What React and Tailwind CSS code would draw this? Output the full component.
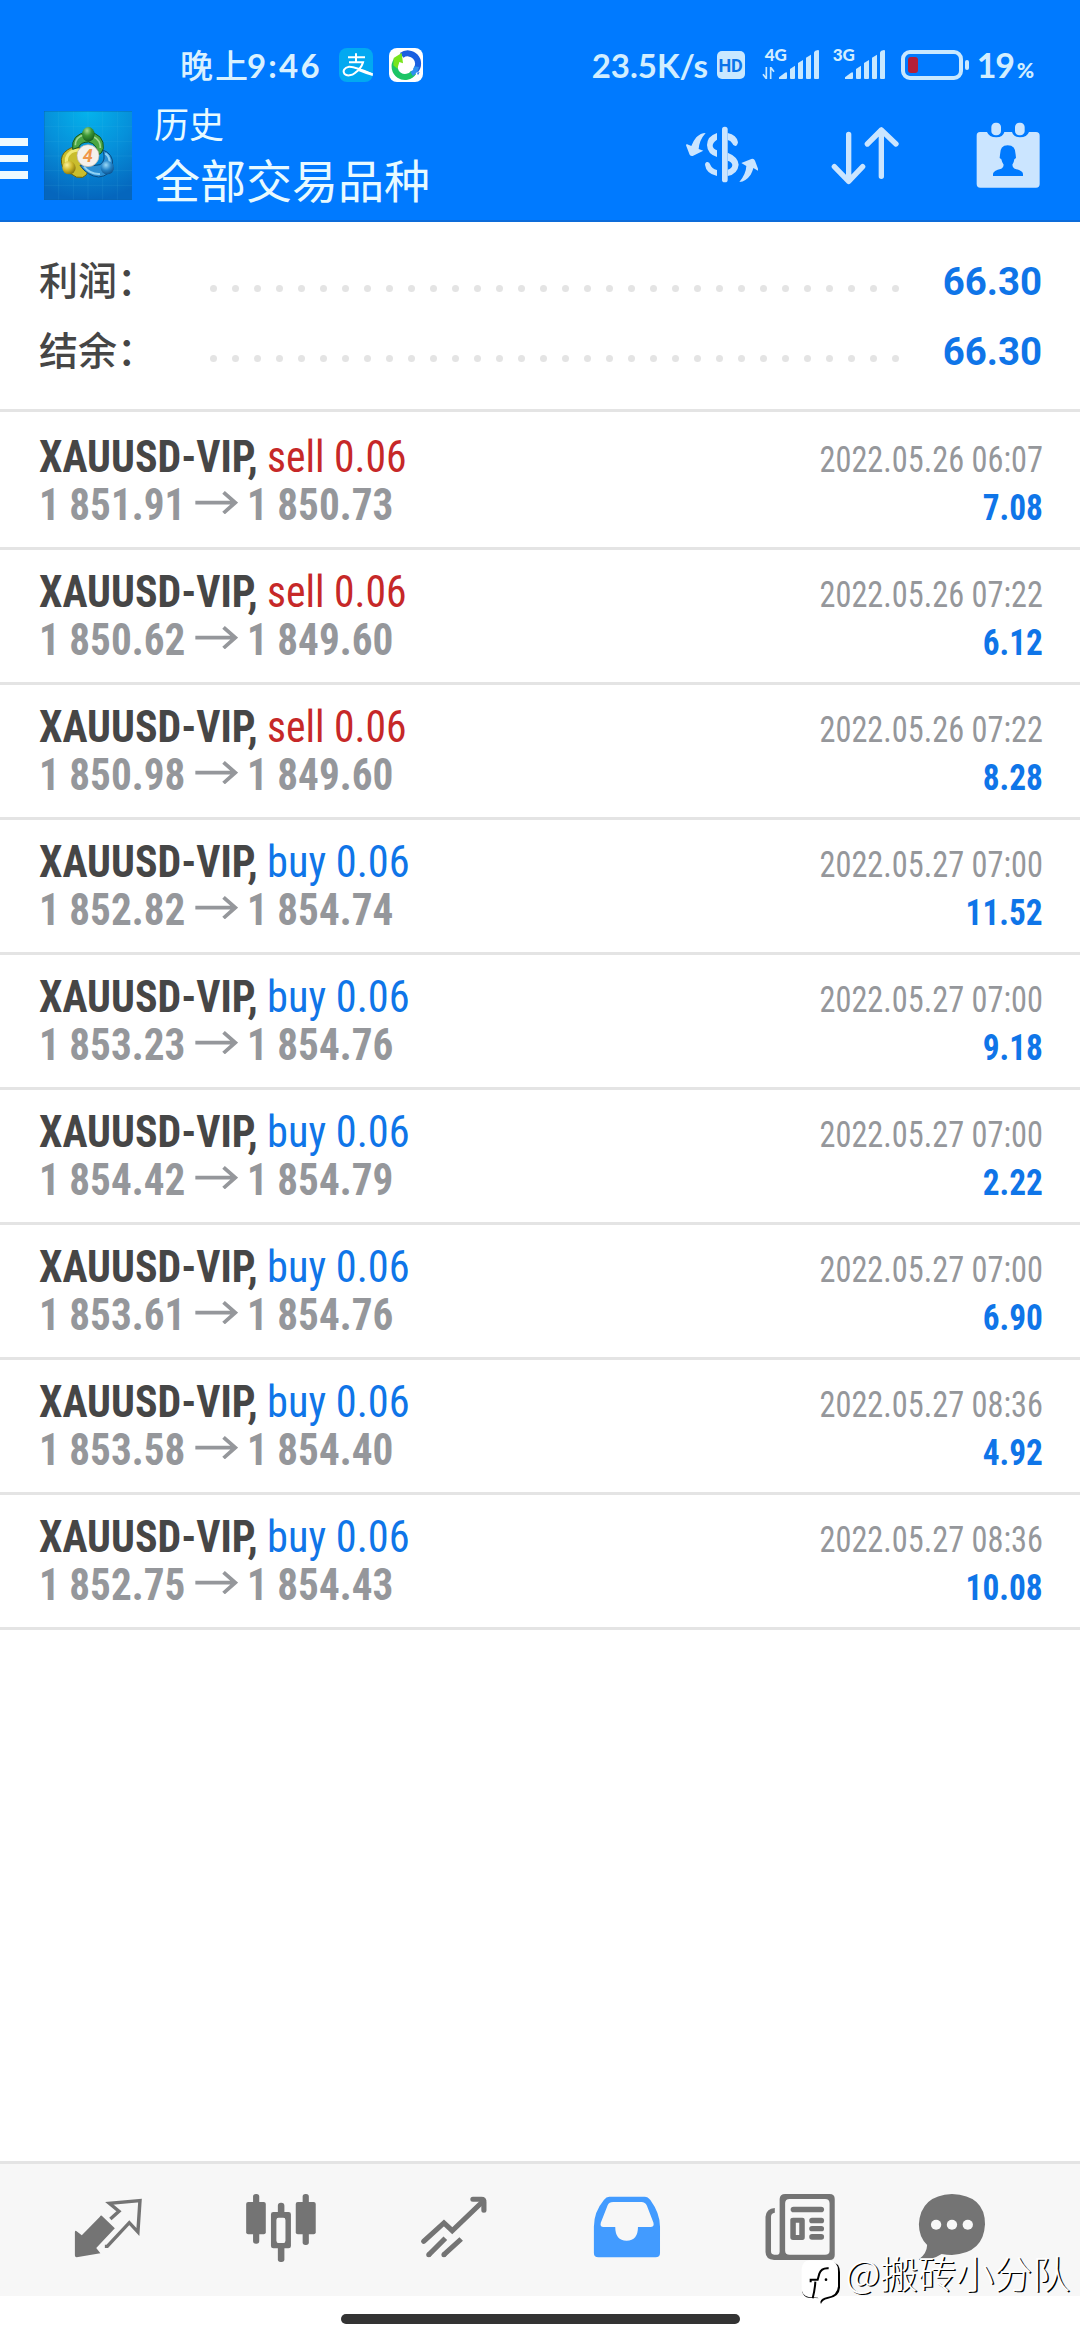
const trades = [
  ["sell", "1 851.91", "1 850.73", "2022.05.26 06:07", "7.08"],
  ["sell", "1 850.62", "1 849.60", "2022.05.26 07:22", "6.12"],
  ["sell", "1 850.98", "1 849.60", "2022.05.26 07:22", "8.28"],
  ["buy", "1 852.82", "1 854.74", "2022.05.27 07:00", "11.52"],
  ["buy", "1 853.23", "1 854.76", "2022.05.27 07:00", "9.18"],
  ["buy", "1 854.42", "1 854.79", "2022.05.27 07:00", "2.22"],
  ["buy", "1 853.61", "1 854.76", "2022.05.27 07:00", "6.90"],
  ["buy", "1 853.58", "1 854.40", "2022.05.27 08:36", "4.92"],
  ["buy", "1 852.75", "1 854.43", "2022.05.27 08:36", "10.08"],
];

function AlipayIcon() {
  return (
    <svg className="h-[34px] w-[34px]" viewBox="0 0 102 102">
      <rect width="102" height="102" rx="24" fill="#02a9f1" />
      <path d="M27 28H78M51 16V42M30 43H72C68 56 60 66 49 74C38 83 24 85 17 78C10 70 16 58 30 56C46 55 72 66 101 79" fill="none" stroke="#fff" strokeWidth="6" />
      <path d="M60 64Q82 69 101 76V84Q80 78 56 68Z" fill="#fff" />
    </svg>
  );
}

function SyncIcon() {
  return (
    <svg className="h-[34px] w-[34px]" viewBox="0 0 102 102">
      <rect width="102" height="102" rx="24" fill="#fff" />
      <path d="M38 22A31 31 0 0 1 80 67" fill="none" stroke="#1a5fe0" strokeWidth="18" />
      <path d="M22 38A31 31 0 0 0 74 73" fill="none" stroke="#1cc465" strokeWidth="18" />
      <path d="M68 78A32 32 0 0 0 83 56" fill="none" stroke="#2f8ff0" strokeWidth="14" />
      <path d="M14 30L38 15L42 46L31 42L25 62L13 52Z" fill="#77e41c" />
      <path d="M84 74L92 72L87 82Z" fill="#1a6fe8" />
    </svg>
  );
}

function Signal() {
  return (
    <svg className="h-[29px] w-10" viewBox="0 0 120 87" fill="#c8e8ff">
      <path d="M0 87V82L18 68Q24 64 24 70V84Q24 87 21 87Z" />
      <path d="M33 57L48 47V84Q48 87 45 87H36Q33 87 33 84Z" />
      <path d="M57 39L72 30V84Q72 87 69 87H60Q57 87 57 84Z" />
      <path d="M81 23L96 14V84Q96 87 93 87H84Q81 87 81 84Z" />
      <path d="M105 7Q107 1 117 0Q120 0 120 3V84Q120 87 117 87H108Q105 87 105 84Z" />
    </svg>
  );
}

function AppLogo() {
  return (
    <svg className="h-[89px] w-[88px]" viewBox="132 213 264 267" preserveAspectRatio="none">
      <defs>
        <radialGradient id="bg" cx="0.5" cy="0" r="1">
          <stop offset="0" stopColor="#04b3ec" />
          <stop offset="0.5" stopColor="#0690da" />
          <stop offset="1" stopColor="#0566bd" />
        </radialGradient>
        <radialGradient id="gr" cx="0.4" cy="0.25" r="0.8">
          <stop offset="0" stopColor="#a5dd93" />
          <stop offset="0.45" stopColor="#3c9635" />
          <stop offset="1" stopColor="#12561b" />
        </radialGradient>
        <radialGradient id="ye" cx="0.35" cy="0.3" r="0.8">
          <stop offset="0" stopColor="#fbf39a" />
          <stop offset="0.5" stopColor="#cdb527" />
          <stop offset="1" stopColor="#75680c" />
        </radialGradient>
        <radialGradient id="bl" cx="0.4" cy="0.3" r="0.8">
          <stop offset="0" stopColor="#9ad9f8" />
          <stop offset="0.5" stopColor="#2382c6" />
          <stop offset="1" stopColor="#084782" />
        </radialGradient>
      </defs>
      <rect x="132" y="213" width="264" height="267" fill="url(#bg)" />
      <path d="M176 213V480M220 213V480M264 213V480M308 213V480M352 213V480M132 260H396M132 304H396M132 348H396M132 392H396M132 436H396" stroke="#5cc4f0" strokeOpacity="0.22" strokeWidth="1.5" />
      <path d="M132 214.500H396M133 213V480M132 479H396" stroke="#0b5fa8" strokeOpacity="0.6" strokeWidth="2" />
      <path d="M214 402A40 40 0 0 1 202 330Q224 314 244 326L256 372Q274 400 248 412Q228 416 214 402Z" fill="#c9bd2d" stroke="#64600f" strokeWidth="3" />
      <path d="M202 376Q192 352 213 336Q226 328 238 332" fill="none" stroke="#f0e976" strokeWidth="9" />
      <path d="M262 372Q282 380 300 374Q320 362 308 330Q340 340 338 376Q330 408 296 411Q262 408 240 376Z" fill="#2c8fd3" stroke="#0b4b80" strokeWidth="3" />
      <path d="M252 380Q272 404 300 402M316 340Q332 352 328 372" fill="none" stroke="#8fd2f4" strokeWidth="6" />
      <path d="M218 328Q212 282 264 276Q314 282 310 326Q306 342 292 346Q294 312 266 306Q242 306 236 322Z" fill="#4ba643" stroke="#14561d" strokeWidth="3" />
      <path d="M226 316Q226 290 252 285M280 290Q302 300 301 324" fill="none" stroke="#9fd691" strokeWidth="5" />
      <ellipse cx="265" cy="283" rx="19" ry="22" fill="url(#gr)" />
      <circle cx="207" cy="383" r="20" fill="url(#ye)" />
      <circle cx="322" cy="383" r="20" fill="url(#bl)" />
      <circle cx="264" cy="347" r="33" fill="#f5f1ec" stroke="#b9b0a4" strokeWidth="2" />
      <text x="263" y="366" textAnchor="middle" fontFamily="Roboto" fontSize="54" fontWeight="700" fontStyle="italic" fill="#f0964a">4</text>
    </svg>
  );
}

function DollarIcon() {
  return (
    <svg className="h-20 w-20" viewBox="306 222 240 240" fill="#cbe5ff">
      <rect x="426" y="260" width="17" height="167" rx="8" />
      <path d="M411 279V299Q398 307 398 318Q399 326 411 331V351Q382 342 381 315Q382 288 411 279Z" />
      <path d="M380 366Q388 364 391 374Q395 386 411 390V408Q378 400 375 374Q375 368 380 366Z" />
      <path d="M443 279Q470 284 474 307Q472 318 466 318Q460 318 456 309Q452 301 443 300Z" />
      <path fillRule="evenodd" d="M443 338Q474 350 476 374Q473 402 443 408ZM443 362V389Q456 386 457 375Q456 366 443 362Z" />
      <path d="M377 279Q362 279 349 292Q339 304 334 318L320 312L318 316L329 344Q332 349 338 348L370 332L356 327Q358 300 377 279Z" />
      <path d="M478 426Q498 424 512 404Q518 394 520 384L534 392V386L525 362Q522 355 514 357L484 369L499 378Q498 402 478 426Z" />
    </svg>
  );
}

function SortIcon() {
  return (
    <svg className="h-20 w-20" viewBox="15 222 240 240" fill="none" stroke="#cbe5ff" strokeWidth="16" strokeLinecap="round" strokeLinejoin="round">
      <path d="M86 283V424M43 380L86 424L128 380" />
      <path d="M184 409V270M142 312L184 270L228 312" />
    </svg>
  );
}

function CalendarIcon() {
  return (
    <svg className="h-20 w-20" viewBox="444 222 240 240" fill="#cbe5ff">
      <path fillRule="evenodd" d="M480 276H501Q507 292 529 292Q549 292 553 276H576Q581 292 600 292Q621 292 627 276H648Q659 276 659 287V432Q659 443 648 443H481Q470 443 470 432V287Q470 276 480 276ZM563 316Q540 316 540 344L539 354L544 358Q546 368 551 374Q551 382 544 386Q519 392 519 402V408H609V402Q609 392 584 386Q577 382 577 374Q582 368 583 358L588 354L587 344Q587 316 563 316Z" />
      <rect x="514" y="248" width="29" height="38" rx="13" />
      <rect x="585" y="248" width="29" height="38" rx="13" />
    </svg>
  );
}

function TradeArrow() {
  return (
    <svg className="mt-[10px] mr-[9px] h-[23px] w-[43px] self-start" viewBox="567 784 125 69" preserveAspectRatio="none" fill="none" stroke="#95979b" strokeWidth="11">
      <path d="M568 819H684M650 788L684 819L650 850" />
    </svg>
  );
}

function NavIcon({ x, children }) {
  return (
    <svg className="h-[90px] w-20" viewBox={x + " 120 232.3 270"} preserveAspectRatio="none" fill="#747474">
      {children}
    </svg>
  );
}

export default function App() {
  return (
    <div className="flex h-[2340px] w-[1080px] flex-col overflow-hidden bg-white font-['Roboto','Noto_Sans_CJK_SC',sans-serif]">
      <header className="h-[222px] border-b-2 border-[#0d6cda] bg-[#007aff] text-[#e8faff]">
        <div className="flex h-[104px] items-end justify-between pr-[46px] pl-[180px] font-['Lato']">
          <div className="flex h-14 items-start">
            <span className="flex w-[159px] text-[33px] leading-[34px] whitespace-nowrap text-[#d9f1ff]">
              <span className="-mt-px w-[67px] font-['Noto_Sans_CJK_SC'] font-medium tracking-[2px]">晚上</span>
              <span className="font-bold tracking-[2.2px]">9:46</span>
            </span>
            <AlipayIcon />
            <span className="w-4" />
            <SyncIcon />
          </div>
          <div className="flex h-14 items-start text-[#d2eeff]">
            <span className="w-[125px] text-[33px] leading-[34px] font-bold whitespace-nowrap">23.5K/s</span>
            <span className="mt-[3px] flex h-7 w-7 items-center justify-center rounded-[5px] bg-[#c8e8ff] font-['Roboto'] text-[18px] font-bold text-[#0a74ea]">HD</span>
            <span className="ml-[17px] flex h-[31px] w-[17px] flex-col items-start justify-between">
              <span className="pl-[3px] text-[17px] leading-[13px] font-black">4G</span>
              <svg className="h-3 w-[13px]" viewBox="0 0 39 36" stroke="#c8e8ff" strokeWidth="5" fill="none">
                <path d="M13 0V36M3 22L12 34M26 36V0M27 2L36 14" />
              </svg>
            </span>
            <span className="mt-0.5 flex"><Signal /></span>
            <span className="ml-[14px] w-3 text-[17px] leading-[13px] font-black">3G</span>
            <span className="mt-0.5 flex"><Signal /></span>
            <span className="mt-0.5 ml-4 flex h-[30px] w-[62px] items-center rounded-[9px] border-4 border-[#c8e8ff] pl-[3px]">
              <span className="h-4 w-[10px] rounded-[3px] bg-[#b51f38]" />
            </span>
            <span className="mt-3 ml-0.5 h-[10px] w-1 rounded-sm bg-[#c8e8ff]" />
            <span className="ml-[8px] w-[40px] text-[34px] leading-[34px] font-bold tracking-[-1px]">19</span>
            <span className="mt-[10px] text-[21px] leading-[24px] font-black">%</span>
          </div>
        </div>
        <div className="flex">
          <div className="mt-[34px] flex w-[44px] flex-col gap-[9px]">
            <span className="h-[7.500px] w-7 bg-[#eefaff]" />
            <span className="h-[7.500px] w-7 bg-[#eefaff]" />
            <span className="h-[7.500px] w-7 bg-[#eefaff]" />
          </div>
          <div className="mt-[7px]"><AppLogo /></div>
          <div className="ml-[22px] flex flex-1 flex-col gap-[9px] font-['Noto_Sans_CJK_SC']">
            <span className="text-[35px] leading-[38px]">历史</span>
            <span className="text-[46px] leading-[54px]">全部交易品种</span>
          </div>
          <div className="mt-[10px] mr-8 flex gap-[63px]">
            <DollarIcon />
            <SortIcon />
            <CalendarIcon />
          </div>
        </div>
      </header>

      <section className="h-[190px] border-b-[3px] border-[#e4e4e4] pt-[25px]">
        {["利润：", "结余："].map((label) => (
          <div key={label} className="flex h-[70px] items-baseline pr-[38px] pl-[39px] leading-[70px]">
            <span className="w-[171px] font-['Noto_Sans_CJK_SC'] text-[39px] leading-[40px] font-medium text-[#464646]">{label}</span>
            <span className="mt-[38px] flex w-[689px] justify-between self-start">
              {Array.from({ length: 32 }, (_, i) => (
                <span key={i} className="h-[7px] w-[7px] rounded-full bg-[#e4e4e4]" />
              ))}
            </span>
            <span className="flex-1 origin-right scale-x-[0.985] text-right text-[39px] font-bold text-[#0f75e8]">66.30</span>
          </div>
        ))}
      </section>

      <main className="flex-1 pt-[3px] font-['Roboto_Condensed']">
        {trades.map(([side, open, close, date, profit], i) => (
          <div key={i} className="h-[135px] border-b-[3px] border-[#e4e4e4] pt-[18px] pr-[37.500px] pl-[39px] whitespace-nowrap">
            <div className="flex h-12 items-baseline text-[44px] leading-[48px]">
              <span className="w-[228px] origin-left scale-x-[0.952] font-bold text-[#464646]">XAUUSD-VIP,</span>
              <span className={side === "sell" ? "origin-left scale-x-[0.945] text-[#c62828]" : "origin-left scale-x-[0.963] text-[#0f75e8]"}>{side} 0.06</span>
              <span className="ml-auto origin-right scale-x-[0.873] text-[37px] leading-10 text-[#95979b]">{date}</span>
            </div>
            <div className="flex h-12 items-baseline text-[44px] leading-[48px] font-bold text-[#95979b]">
              <span className="w-[156px] origin-left scale-x-[0.936]">{open}</span>
              <TradeArrow />
              <span className="origin-left scale-x-[0.936]">{close}</span>
              <span className="ml-auto origin-right scale-x-[0.9] text-[37px] leading-10 text-[#0f75e8]">{profit}</span>
            </div>
          </div>
        ))}
      </main>

      <nav className="flex h-[135px] border-t-[3px] border-[#e4e4e4] bg-[#f7f7f7] pt-4 pl-[68px]">
        <div className="w-[173px]">
          <NavIcon x="199">
            <path d="M297 227L335 265L281 324L293 340L224 352Q219 352 219 346V276Q220 270 224 274L239 286L291 231Q294 226 297 227Z" />
            <path d="M322 237L347 214L319 190L408 182L402 276L377 248L313 319H306" fill="none" stroke="#747474" strokeWidth="10" />
          </NavIcon>
        </div>
        <div className="w-[173px]">
          <NavIcon x="700">
            <rect x="735" y="162" width="18" height="149" rx="8" />
            <rect x="715" y="186" width="57" height="97" rx="6" />
            <rect x="879" y="162" width="18" height="153" rx="8" />
            <rect x="859" y="186" width="58" height="97" rx="6" />
            <rect x="807" y="188" width="19" height="40" rx="9" />
            <rect x="807" y="316" width="19" height="50" rx="8" />
            <path fillRule="evenodd" d="M794 216H838Q845 216 845 223V318Q845 325 838 325H794Q787 325 787 318V223Q787 216 794 216ZM809 233Q803 233 803 240V302Q803 309 809 309H823Q829 309 829 302V240Q829 233 823 233Z" fill="#747474" />
            <rect x="804" y="234" width="24" height="74" rx="5" fill="#f7f7f7" />
          </NavIcon>
        </div>
        <div className="w-[173px]">
          <NavIcon x="1202">
            <g fill="none" stroke="#747474" strokeWidth="15" strokeLinejoin="miter">
              <path d="M1230 304L1289 249L1313 272L1404 182" strokeLinecap="round" />
              <path d="M1373 178H1398Q1405 178 1405 186V211" strokeLinecap="round" />
              <path d="M1293 295L1245 344M1339 297L1289 344" />
            </g>
            <circle cx="1245" cy="344" r="7.500" />
            <circle cx="1289" cy="344" r="7.500" />
          </NavIcon>
        </div>
        <div className="w-[173px]">
          <NavIcon x="138">
            <path fill="#429bff" fillRule="evenodd" d="M203 170H305Q315 170 322 180Q350 220 350 260V339Q350 352 337 352H171Q158 352 158 339V260Q158 216 187 180Q194 170 203 170ZM214 186Q202 186 198 196L178 248Q175 261 186 261H220Q220 302 253 302Q286 302 286 261H322Q334 261 331 248L312 197Q307 186 296 186Z" />
          </NavIcon>
        </div>
        <div className="w-[152px]">
          <NavIcon x="641">
            <path fillRule="evenodd" d="M714 162H843Q858 162 858 177V345Q858 360 843 360H682Q657 358 657 336V230Q659 206 684 204V218Q673 220 673 230V334Q673 344 682 344H692Q698 344 698 336V177Q699 162 714 162ZM727 177Q714 177 714 190V332Q714 344 727 344H830Q843 344 843 332V190Q843 177 830 177Z" />
            <rect x="730" y="200" width="97" height="17" rx="8.500" />
            <path fillRule="evenodd" d="M737 233H764Q771 233 771 240V292Q771 300 764 300H737Q729 300 729 292V240Q729 233 737 233ZM745 248V285H755V248Z" />
            <rect x="784" y="233" width="43" height="17" rx="8" />
            <rect x="784" y="258" width="43" height="16" rx="8" />
            <rect x="784" y="282" width="43" height="17" rx="8" />
          </NavIcon>
        </div>
        <div>
          <NavIcon x="1083">
            <path d="M1199 162Q1295 166 1295 253Q1291 340 1199 345Q1184 345 1169 342Q1142 360 1108 360Q1101 360 1105 356Q1126 340 1127 315Q1103 292 1103 253Q1108 166 1199 162Z" />
            <circle cx="1153" cy="254" r="15" fill="#f7f7f7" />
            <circle cx="1199" cy="254" r="15" fill="#f7f7f7" />
            <circle cx="1245" cy="254" r="15" fill="#f7f7f7" />
          </NavIcon>
        </div>
      </nav>

      <footer className="relative flex h-11 justify-center pt-[18px]">
        <div className="h-[10px] w-[399px] rounded-full bg-[#333]" />
        <div className="absolute -top-[46px] right-[10px] flex items-start">
          <svg className="mt-[9px] h-[46px] w-[41px]" viewBox="58 236 123 138">
            <path d="M90 244H150Q178 246 178 276V322Q176 350 142 355Q124 359 121 371Q116 360 122 354L84 352Q70 350 64 334V266Q68 246 90 244Z" fill="#000" />
            <path d="M86 240H146Q172 242 172 272V318Q170 346 140 350Q122 354 119 364L112 352L84 350Q64 346 63 326V264Q66 242 86 240Z" fill="#fff" />
            <path d="M144 264Q122 262 116 280L111 298H90V306M104 304Q103 326 96 354" fill="none" stroke="#000" strokeWidth="6" />
            <circle cx="136" cy="298" r="4" fill="#000" />
          </svg>
          <span className="ml-1 font-['Noto_Sans_CJK_SC'] text-[38px] leading-[44px] font-light whitespace-nowrap text-white [text-shadow:1.5px_1px_0_#000]">@搬砖小分队</span>
        </div>
      </footer>
    </div>
  );
}
